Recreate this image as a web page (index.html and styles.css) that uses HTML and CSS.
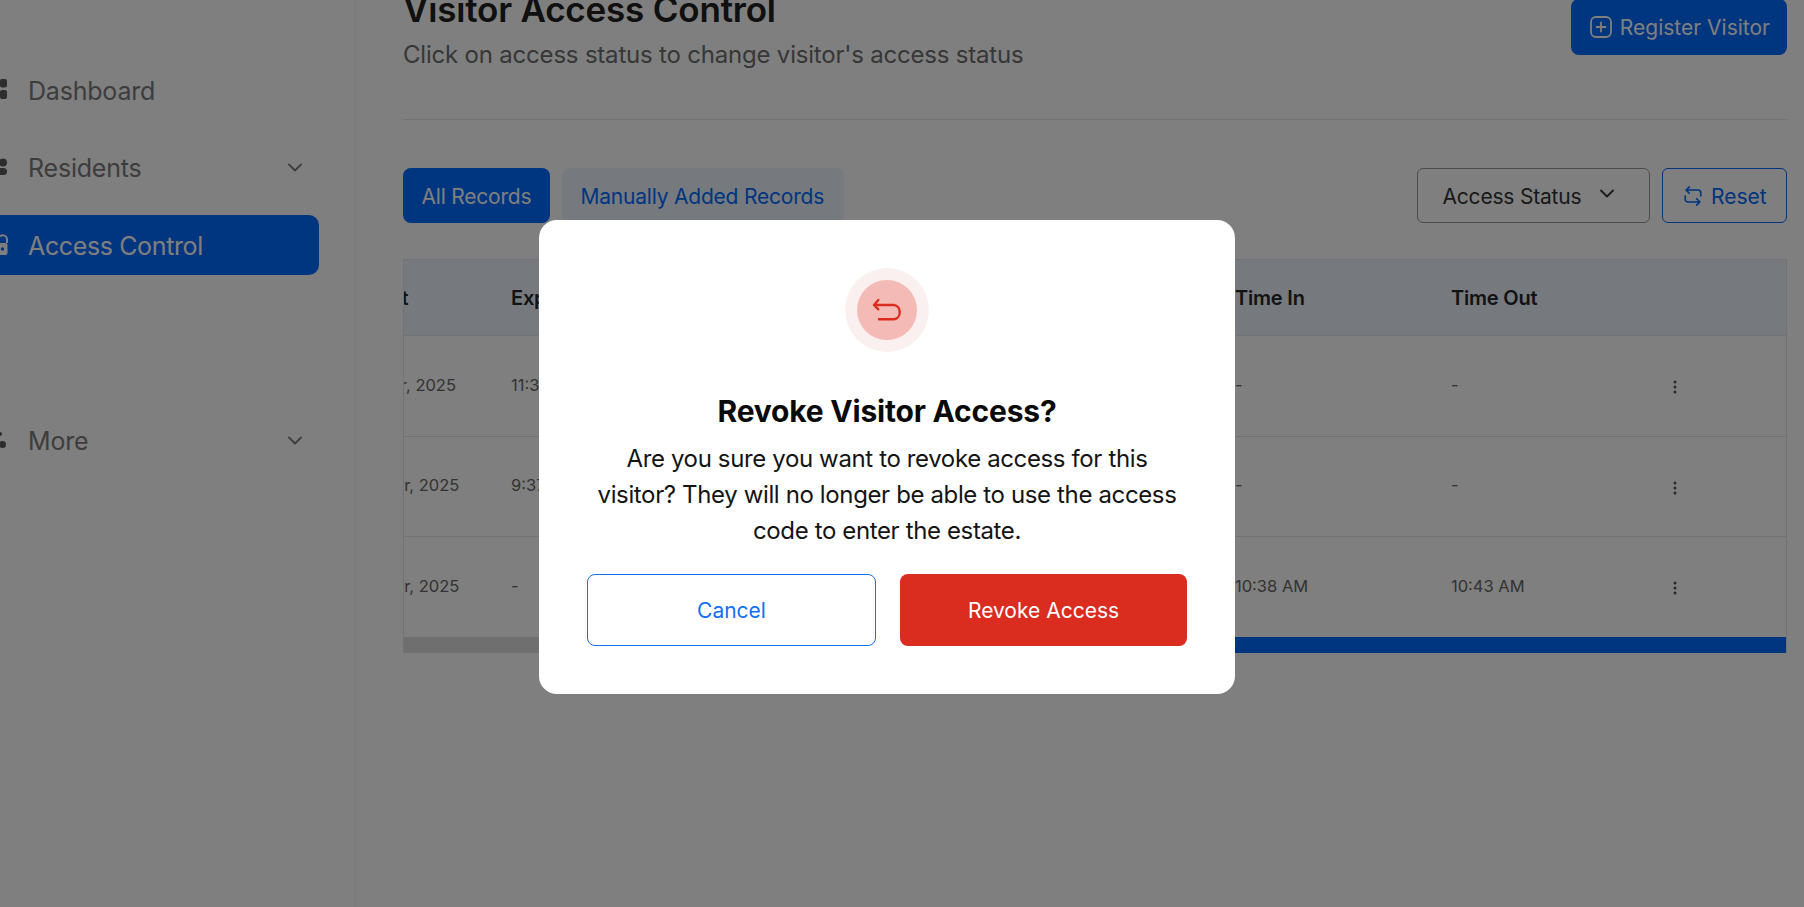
FILE: index.html
```html
<!DOCTYPE html>
<html lang="en">

<head>
    <meta charset="UTF-8">
    <title>Visitor Access Control</title>
    <link rel="stylesheet" href="styles.css">
</head>

<body>
    <div class="page">
        <aside class="sidebar">
            <a class="nav-item">
                <svg class="nav-icon" viewBox="0 0 24 24" fill="currentColor">
                    <rect x="3" y="1" width="7" height="8.500" rx="2" />
                    <rect x="12" y="1" width="7" height="8.500" rx="2" />
                    <rect x="3" y="12" width="7" height="9" rx="2" />
                    <rect x="12" y="12" width="7" height="9" rx="2" />
                </svg>
                <span class="nav-label">Dashboard</span>
            </a>
            <a class="nav-item">
                <svg class="nav-icon" viewBox="0 0 24 24" fill="currentColor">
                    <circle cx="15" cy="6.500" r="4" />
                    <rect x="6" y="12" width="13" height="7" rx="3.500" />
                </svg>
                <span class="nav-label">Residents</span>
                <svg class="chevron" viewBox="0 0 14 9" fill="none">
                    <path d="M1 1.500l6 6 6-6" />
                </svg>
            </a>
            <a class="nav-item active">
                <svg class="nav-icon" viewBox="0 0 24 24" fill="currentColor">
                    <path d="M10.500 10V6.500a4.250 4.250 0 0 1 8.500 0V10" fill="none" stroke="currentColor" stroke-width="2" />
                    <path fill-rule="evenodd" d="M9 10h8.500a2 2 0 0 1 2 2v8a2 2 0 0 1-2 2H9a2 2 0 0 1-2-2v-8a2 2 0 0 1 2-2zm5.500 4.300a1.700 1.700 0 1 0 0 3.400 1.700 1.700 0 0 0 0-3.400z" />
                </svg>
                <span class="nav-label">Access Control</span>
            </a>
            <a class="nav-item more">
                <svg class="nav-icon" viewBox="0 0 24 24" fill="currentColor">
                    <circle cx="12" cy="5" r="2" />
                    <circle cx="14.500" cy="15.500" r="3.500" />
                </svg>
                <span class="nav-label">More</span>
                <svg class="chevron" viewBox="0 0 14 9" fill="none">
                    <path d="M1 1.500l6 6 6-6" />
                </svg>
            </a>
        </aside>

        <main class="main">
            <div class="page-head">
                <div>
                    <h1 class="page-title">Visitor Access Control</h1>
                    <p class="page-sub">Click on access status to change visitor's access status</p>
                </div>
                <button class="btn-register">
                    <svg class="icon-22" viewBox="0 0 22 22" fill="none">
                        <rect x="1" y="1" width="20" height="20" rx="5" />
                        <path d="M11 6.500v9M6.500 11h9" />
                    </svg>
                    Register Visitor
                </button>
            </div>

            <div class="toolbar">
                <div class="tabs">
                    <button class="tab tab-on">All Records</button>
                    <button class="tab">Manually Added Records</button>
                </div>
                <div class="filters">
                    <button class="filter-select">
                        Access Status
                        <svg class="chevron" viewBox="0 0 14 9" fill="none">
                            <path d="M1 1.500l6 6 6-6" />
                        </svg>
                    </button>
                    <button class="btn-reset">
                        <svg class="icon-22" viewBox="0 0 24 24" fill="none">
                            <path d="M8 2L4.500 5.500 8 9M4.500 5.500h13a3 3 0 0 1 3 3V12M16 22l3.500-3.500L16 15M19.500 18.500h-13a3 3 0 0 1-3-3V12" />
                        </svg>
                        Reset
                    </button>
                </div>
            </div>

            <div class="table-box">
                <div class="table-scroll">
                    <table class="records">
                        <colgroup>
                            <col class="c-date">
                            <col class="c-exp">
                            <col class="c-code">
                            <col class="c-status">
                            <col class="c-in">
                            <col class="c-out">
                            <col class="c-act">
                        </colgroup>
                        <thead>
                            <tr>
                                <th>Day of Visit</th>
                                <th>Expected Time</th>
                                <th>Access Code</th>
                                <th>Access Status</th>
                                <th>Time In</th>
                                <th>Time Out</th>
                                <th></th>
                            </tr>
                        </thead>
                        <tbody>
                            <tr>
                                <td>11 November, 2025</td>
                                <td>11:30 AM</td>
                                <td>482913</td>
                                <td>Active</td>
                                <td>-</td>
                                <td>-</td>
                                <td><svg class="dots" viewBox="0 0 4 14" fill="currentColor"><circle cx="2" cy="2" r="1.500" /><circle cx="2" cy="7" r="1.500" /><circle cx="2" cy="12" r="1.500" /></svg></td>
                            </tr>
                            <tr>
                                <td>12 November, 2025</td>
                                <td>9:37 AM</td>
                                <td>730164</td>
                                <td>Active</td>
                                <td>-</td>
                                <td>-</td>
                                <td><svg class="dots" viewBox="0 0 4 14" fill="currentColor"><circle cx="2" cy="2" r="1.500" /><circle cx="2" cy="7" r="1.500" /><circle cx="2" cy="12" r="1.500" /></svg></td>
                            </tr>
                            <tr>
                                <td>12 November, 2025</td>
                                <td>-</td>
                                <td>205871</td>
                                <td>Used</td>
                                <td>10:38 AM</td>
                                <td>10:43 AM</td>
                                <td><svg class="dots" viewBox="0 0 4 14" fill="currentColor"><circle cx="2" cy="2" r="1.500" /><circle cx="2" cy="7" r="1.500" /><circle cx="2" cy="12" r="1.500" /></svg></td>
                            </tr>
                        </tbody>
                    </table>
                </div>
                <div class="scroll-track">
                    <div class="scroll-thumb"></div>
                </div>
            </div>
        </main>
    </div>

    <div class="overlay">
        <div class="modal">
            <div class="modal-ring">
                <div class="modal-disc">
                    <svg class="undo" viewBox="0 0 30 30" fill="none">
                        <path d="M6.300 5L2 10l4.300 4.300M2 10h20a6.500 7.200 0 0 1 0 14.300H7" />
                    </svg>
                </div>
            </div>
            <h2 class="modal-title">Revoke Visitor Access?</h2>
            <p class="modal-text">Are you sure you want to revoke access for this visitor? They will no longer be able to use the access code to enter the estate.</p>
            <div class="modal-actions">
                <button class="btn-cancel">Cancel</button>
                <button class="btn-revoke">Revoke Access</button>
            </div>
        </div>
    </div>
</body>

</html>
```

FILE: styles.css
```css
:root {
    --blue: #006aff;
    --tint: #ecf4ff;
    --line: #e4e4e4;
    --side-text: #7a7a7a;
    --font: Inter, "Noto Sans", sans-serif;
}

html,
body {
    padding: 0;
    margin: 0;
    height: 100%;
    overflow: hidden;
    background: #fff;
}

body {
    font-family: var(--font);
}

button {
    font-family: var(--font);
    cursor: pointer;
}

/* page is scrolled a bit in both directions behind the dialog */
.page {
    display: flex;
    margin: -40px 0 0 -40px;
    min-height: 947px;
}

.sidebar {
    box-sizing: border-box;
    flex: 0 0 396px;
    padding: 100px 36px 0 8px;
    border-right: 1px solid #f4f4f4;
    display: flex;
    flex-direction: column;
    gap: 17.500px;
}

.nav-item {
    display: flex;
    align-items: center;
    gap: 16px;
    flex: 0 0 60px;
    padding: 0 17px 0 20px;
    border-radius: 10px;
    color: var(--side-text);
    font-size: 25px;
    letter-spacing: -0.2px;
}

.nav-item.active {
    background: var(--blue);
    color: #fff;
    letter-spacing: -0.37px;
}

.nav-item.more {
    margin-top: 118px;
}

.nav-icon {
    flex: none;
    width: 24px;
    height: 24px;
    color: #5a5a5a;
}

.active .nav-icon {
    color: #fff;
}

.nav-label {
    flex: 1;
    padding-top: 1px;
}

.chevron {
    flex: none;
    width: 14px;
    height: 9px;
    stroke: currentColor;
    stroke-width: 1.8;
    stroke-linecap: round;
    stroke-linejoin: round;
}

.main {
    box-sizing: border-box;
    flex: 1;
    min-width: 0;
    padding: 29px 17px 0 47px;
}

.page-head {
    display: flex;
    justify-content: space-between;
    align-items: flex-start;
    height: 130px;
    border-bottom: 1px solid var(--line);
}

.page-title {
    margin: 0;
    font-size: 35px;
    line-height: 40px;
    font-weight: 600;
    color: #202020;
    letter-spacing: -0.2px;
}

.page-sub {
    margin: 11px 0 0;
    font-size: 24px;
    line-height: 30px;
    color: #6e6e6e;
    letter-spacing: -0.2px;
}

.btn-register {
    display: flex;
    align-items: center;
    gap: 8px;
    height: 56px;
    margin-top: 10px;
    padding: 0 17px 0 19px;
    border: 0;
    border-radius: 8px;
    background: var(--blue);
    color: #fff;
    font-size: 21px;
}

.icon-22 {
    flex: none;
    width: 22px;
    height: 22px;
    stroke: currentColor;
    stroke-width: 1.800;
    stroke-linecap: round;
    stroke-linejoin: round;
}

.toolbar {
    display: flex;
    justify-content: space-between;
    margin-top: 48px;
}

.tabs,
.filters {
    display: flex;
    gap: 12px;
}

.tab {
    height: 55px;
    padding: 2px 20px 0 18.500px;
    border: 0;
    border-radius: 8px;
    background: var(--tint);
    color: var(--blue);
    font-size: 21px;
    letter-spacing: -0.2px;
}

.tab-on {
    padding: 2px 18.500px 0;
    background: var(--blue);
    color: #fff;
}

.filter-select {
    display: flex;
    align-items: center;
    justify-content: space-between;
    gap: 17px;
    box-sizing: border-box;
    width: 233px;
    height: 55px;
    padding: 2px 35px 0 24.500px;
    border: 1px solid #999;
    border-radius: 6px;
    background: #fff;
    color: #333;
    font-size: 21px;
    letter-spacing: -0.2px;
}

.filter-select .chevron {
    margin-bottom: 6px;
}

.btn-reset {
    display: flex;
    align-items: center;
    gap: 7px;
    box-sizing: border-box;
    width: 125px;
    height: 55px;
    padding: 2px 0 0 19px;
    border: 1px solid var(--blue);
    border-radius: 6px;
    background: #fff;
    color: var(--blue);
    font-size: 21px;
}

.btn-reset .icon-22 {
    margin-bottom: 2px;
}

.table-box {
    margin-top: 36px;
    border: 1px solid var(--line);
    border-bottom: 0;
}

.table-scroll {
    overflow: hidden;
}

.records {
    width: 1479px;
    margin-left: -96px;
    border-collapse: collapse;
    table-layout: fixed;
}

.c-date { width: 203px; }
.c-exp { width: 239px; }
.c-code { width: 250px; }
.c-status { width: 235px; }
.c-in { width: 216px; }
.c-out { width: 217px; }
.c-act { width: 119px; }

.records th {
    height: 75px;
    padding: 0;
    background: var(--tint);
    border-bottom: 1px solid var(--line);
    text-align: left;
    font-size: 20px;
    font-weight: 600;
    color: #262626;
    letter-spacing: -0.2px;
}

.records th:first-child {
    letter-spacing: -0.9px;
}

.records td {
    height: 97.500px;
    padding: 0 0 2px;
    border-bottom: 1px solid var(--line);
    font-size: 16.500px;
    color: #666;
}

.records tr:last-child td {
    border-bottom: 0;
}

.dots {
    display: block;
    width: 4px;
    height: 14px;
    margin: 5px 0 0 5px;
    color: #555;
}

.scroll-track {
    height: 16px;
    background: #dedfe1;
    padding-left: 300px;
}

.scroll-thumb {
    height: 100%;
    background: var(--blue);
}

/* dialog layer */
.overlay {
    position: fixed;
    inset: 0;
    box-sizing: border-box;
    padding: 220px 30px 0 0;
    display: flex;
    justify-content: center;
    align-items: flex-start;
    background: rgba(0, 0, 0, 0.5);
}

.modal {
    box-sizing: border-box;
    width: 696px;
    height: 474px;
    padding: 48px;
    border-radius: 18px;
    background: #fff;
    display: flex;
    flex-direction: column;
    align-items: center;
}

.modal-ring {
    flex: none;
    width: 84px;
    height: 84px;
    border-radius: 50%;
    background: #fbf0f0;
    display: flex;
    justify-content: center;
    align-items: center;
}

.modal-disc {
    width: 60px;
    height: 60px;
    border-radius: 50%;
    background: #f4bbb6;
    display: flex;
    justify-content: center;
    align-items: center;
}

.undo {
    width: 30px;
    height: 30px;
    stroke: #da2d20;
    stroke-width: 2.400;
    stroke-linecap: round;
    stroke-linejoin: round;
}

.modal-title {
    margin: 40px 0 0;
    font-size: 30px;
    line-height: 38px;
    font-weight: 700;
    color: #0a0a0a;
    letter-spacing: -0.2px;
}

.modal-text {
    margin: 11px 0 0;
    font-size: 24px;
    line-height: 36px;
    text-align: center;
    color: #141414;
    letter-spacing: -0.37px;
}

.modal-actions {
    display: flex;
    gap: 24px;
    width: 600px;
    margin-top: auto;
}

.modal-actions button {
    flex: 1;
    height: 72px;
    border-radius: 8px;
    font-size: 21px;
}

.btn-cancel {
    border: 1px solid #1170f5;
    background: #fff;
    color: #1170f5;
}

.btn-revoke {
    border: 0;
    background: #da2d20;
    color: #fff;
}
```
